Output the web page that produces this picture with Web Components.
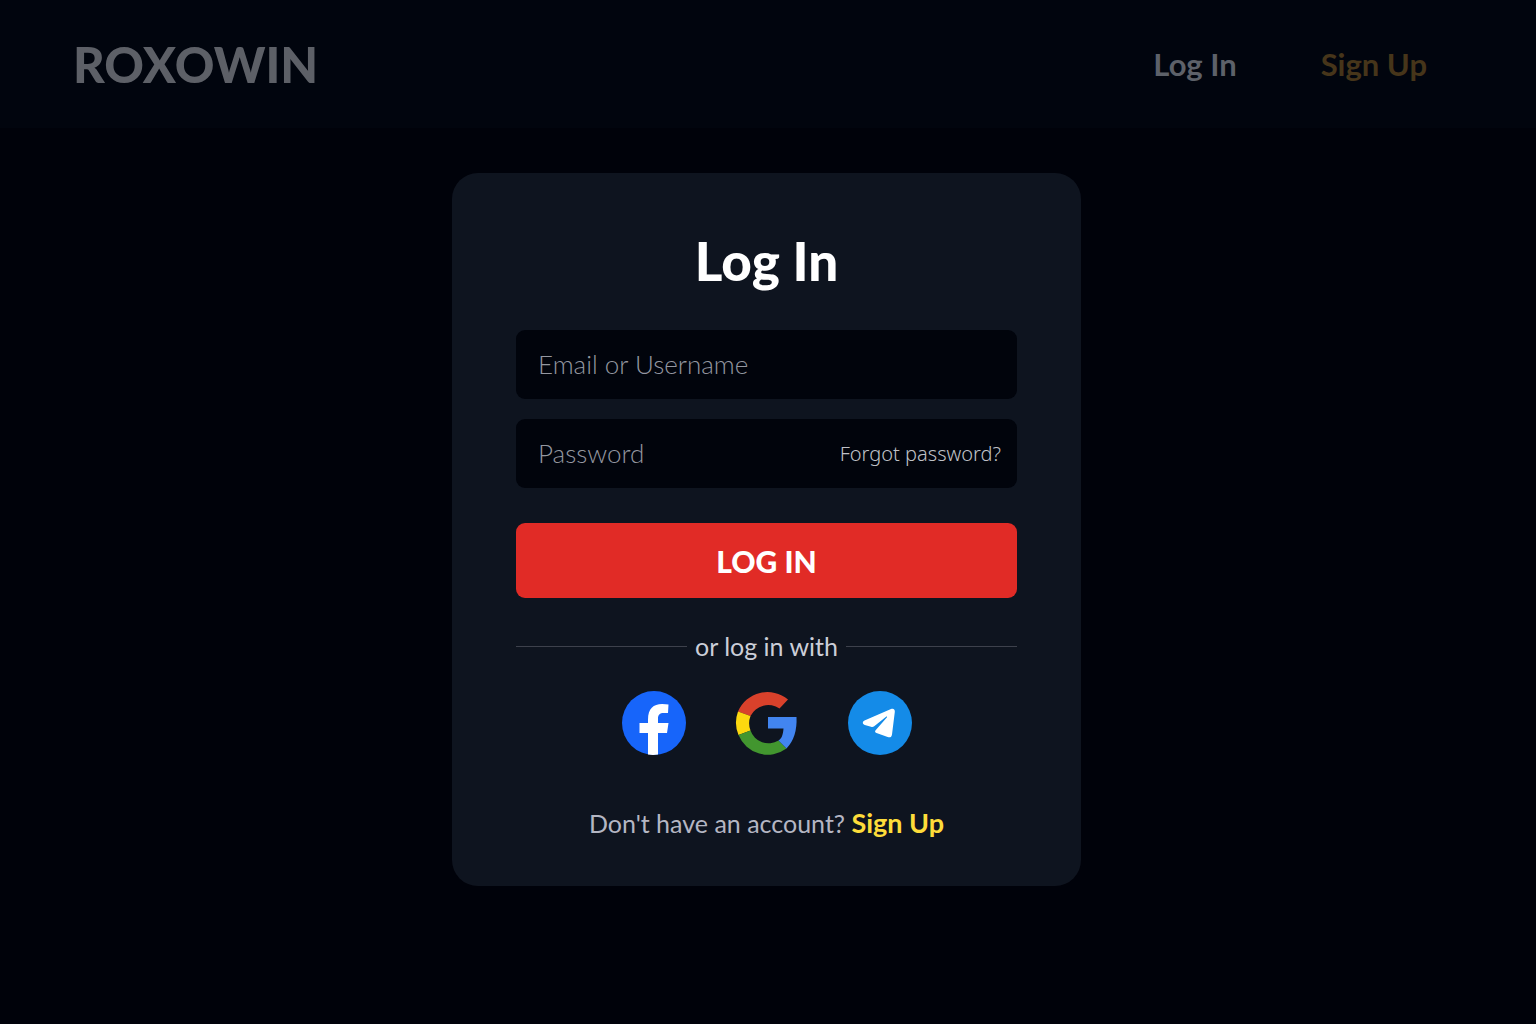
<!DOCTYPE html>
<html lang="en">
<head>
<meta charset="utf-8">
<meta name="viewport" content="width=device-width, initial-scale=1">
<title>ROXOWIN – Log In</title>
<style>
  html, body { margin: 0; }
  body {
    min-height: 100vh;
    background: #00020a;
    color: #fff;
    font-family: Lato, "Open Sans", sans-serif;
    --display: Lato, "Open Sans", sans-serif;
    --panel: #0e141f;
    --field: #01040c;
    --red: #e12b26;
    --yellow: #fddc3a;
  }
</style>
</head>
<body>
<rox-page>
  <rox-header slot="header" brand="ROXOWIN">
    <rox-nav-link href="#login">Log In</rox-nav-link>
    <rox-nav-link href="#signup" accent>Sign Up</rox-nav-link>
  </rox-header>
  <rox-login-card></rox-login-card>
</rox-page>

<script>
const define = (name, html, setup) => {
  const template = document.createElement('template');
  template.innerHTML = html;
  customElements.define(name, class extends HTMLElement {
    constructor() {
      super();
      this.attachShadow({ mode: 'open' }).append(template.content.cloneNode(true));
    }
    connectedCallback() { if (setup) setup(this, this.shadowRoot); }
  });
};

define('rox-page', `
  <style>
    :host { display: flex; flex-direction: column; min-height: 100vh; }
    main { display: flex; justify-content: center; padding: 45px 27px 45px 24px; }
  </style>
  <slot name="header"></slot>
  <main><slot></slot></main>`);

define('rox-header', `
  <style>
    :host { display: block; background: #01050e; }
    header { display: flex; align-items: center; justify-content: space-between; height: 128px; padding: 0 109px 0 73px; }
    .brand { font: 900 49px/60px var(--display); color: #5d6067; text-decoration: none; }
    nav { display: flex; gap: 84px; }
  </style>
  <header><a class="brand" href="#home"></a><nav><slot></slot></nav></header>`,
  (host, root) => { root.querySelector('.brand').textContent = host.getAttribute('brand'); });

define('rox-nav-link', `
  <style>
    :host { display: block; }
    a { font: 700 31px/36px var(--display); color: #5d6169; text-decoration: none; }
    :host([accent]) a { color: #46351a; }
  </style>
  <a><slot></slot></a>`,
  (host, root) => { root.querySelector('a').href = host.getAttribute('href'); });

define('rox-field', `
  <style>
    :host { display: flex; align-items: center; height: 69px; padding: 0 16px 0 22px; box-sizing: border-box;
      background: var(--field); border-radius: 9px; }
    input { flex: 1; width: 0; min-width: 0; padding: 0 0 2px; border: 0; outline: 0; background: none; color: #fff;
      font: 300 26px/36px var(--display); }
    input::placeholder { color: #9497a0; opacity: 1; }
  </style>
  <input><slot></slot>`,
  (host, root) => {
    const input = root.querySelector('input');
    input.type = host.getAttribute('type') || 'text';
    input.placeholder = host.getAttribute('label');
    input.setAttribute('aria-label', host.getAttribute('label'));
  });

define('rox-divider', `
  <style>
    :host { display: flex; align-items: center; gap: 8px; font: 400 25px/36px var(--display); color: #cbced8; }
    i { flex: 1; height: 1px; background: #3d414c; }
  </style>
  <i></i><span><slot></slot></span><i></i>`);

const logos = {
  facebook: `<circle cx="32" cy="32" r="32" fill="#1765fa"/>
    <path fill="#fff" d="M26 63.500V42h-8.500V32H26v-3.500C26 17.500 31.500 13 40 13q4 0 6.500.5L46 22h-4c-4.500 0-6 2-6 5.500V32h10.500L45 42h-9v21.500q-5 .8-10 0z"/>`,
  google: `<path fill="#d9412b" d="M53 8.500 44.500 17.500A20 20 0 0 0 15.500 25L3 20.500A32 32 0 0 1 53 8.500z"/>
    <path fill="#fcd80f" d="M3 20.500 15.500 25a20 20 0 0 0 0 14.500L3.500 44a32 32 0 0 1-.5-23.500z"/>
    <path fill="#42962f" d="M3.500 44 15.500 39.500A19 19 0 0 0 43.500 49.500L51.500 57.500A31.500 31.500 0 0 1 3.500 44z"/>
    <path fill="#4285f0" d="M33 26h28.500q1 20-10 31.500l-8-8c3-2 4.500-5 5-12H33z"/>`,
  telegram: `<circle cx="32" cy="32" r="32" fill="#148be8"/>
    <path fill="#fff" d="M16.500 29.500 43 18c2.500-1 4.200.5 3.800 3L44 43.500c-.4 2.600-2 3.300-4.300 2.500L28.500 42c-1.600-.6-1.800-1.600-.9-2.700L39 26.200c.4-.7 0-1-.6-.6L26.200 35.300c-1 .8-2 .8-3.200.5l-6.200-1.900c-2.500-.8-2.600-3.300-.3-4.400z"/>`
};

define('rox-social', `
  <style>
    :host { display: block; }
    button { display: block; padding: 0; border: 0; background: none; cursor: pointer; }
    svg { display: block; width: 64px; height: 64px; }
  </style>
  <button type="button"><svg viewBox="0 0 64 64" aria-hidden="true"></svg></button>`,
  (host, root) => {
    const name = host.getAttribute('provider');
    root.querySelector('button').setAttribute('aria-label', name);
    root.querySelector('svg').innerHTML = logos[name];
  });

define('rox-login-card', `
  <style>
    :host { display: block; flex: 0 1 629px; box-sizing: border-box; padding: 58px 64px 45px;
      background: var(--panel); border-radius: 26px; }
    form { display: flex; flex-direction: column; }
    h1 { margin: 0 0 39px; font: 900 53px/60px var(--display); text-align: center; }
    .fields { display: flex; flex-direction: column; gap: 20px; margin-bottom: 35px; }
    .forgot { font: 300 20px/28px "Noto Sans", sans-serif; color: #bfc1c7; text-decoration: none; }
    .submit { height: 75px; border: 0; border-radius: 9px; background: var(--red); color: #fff;
      font: 900 30px/36px var(--display); cursor: pointer; }
    rox-divider { margin: 30px 0 27px; }
    .social { display: flex; justify-content: center; gap: 49px; }
    p { margin: 50px 0 0; font: 400 25px/36px var(--display); color: #b4b6c3; text-align: center; }
    p a { font-size: 27px; font-weight: 700; color: var(--yellow); text-decoration: none; }
  </style>
  <form>
    <h1>Log In</h1>
    <div class="fields">
      <rox-field label="Email or Username"></rox-field>
      <rox-field type="password" label="Password"><a class="forgot" href="#forgot">Forgot password?</a></rox-field>
    </div>
    <button class="submit" type="submit">LOG IN</button>
    <rox-divider>or log in with</rox-divider>
    <div class="social">
      <rox-social provider="facebook"></rox-social>
      <rox-social provider="google"></rox-social>
      <rox-social provider="telegram"></rox-social>
    </div>
    <p>Don't have an account? <a href="#signup">Sign Up</a></p>
  </form>`);
</script>
</body>
</html>
